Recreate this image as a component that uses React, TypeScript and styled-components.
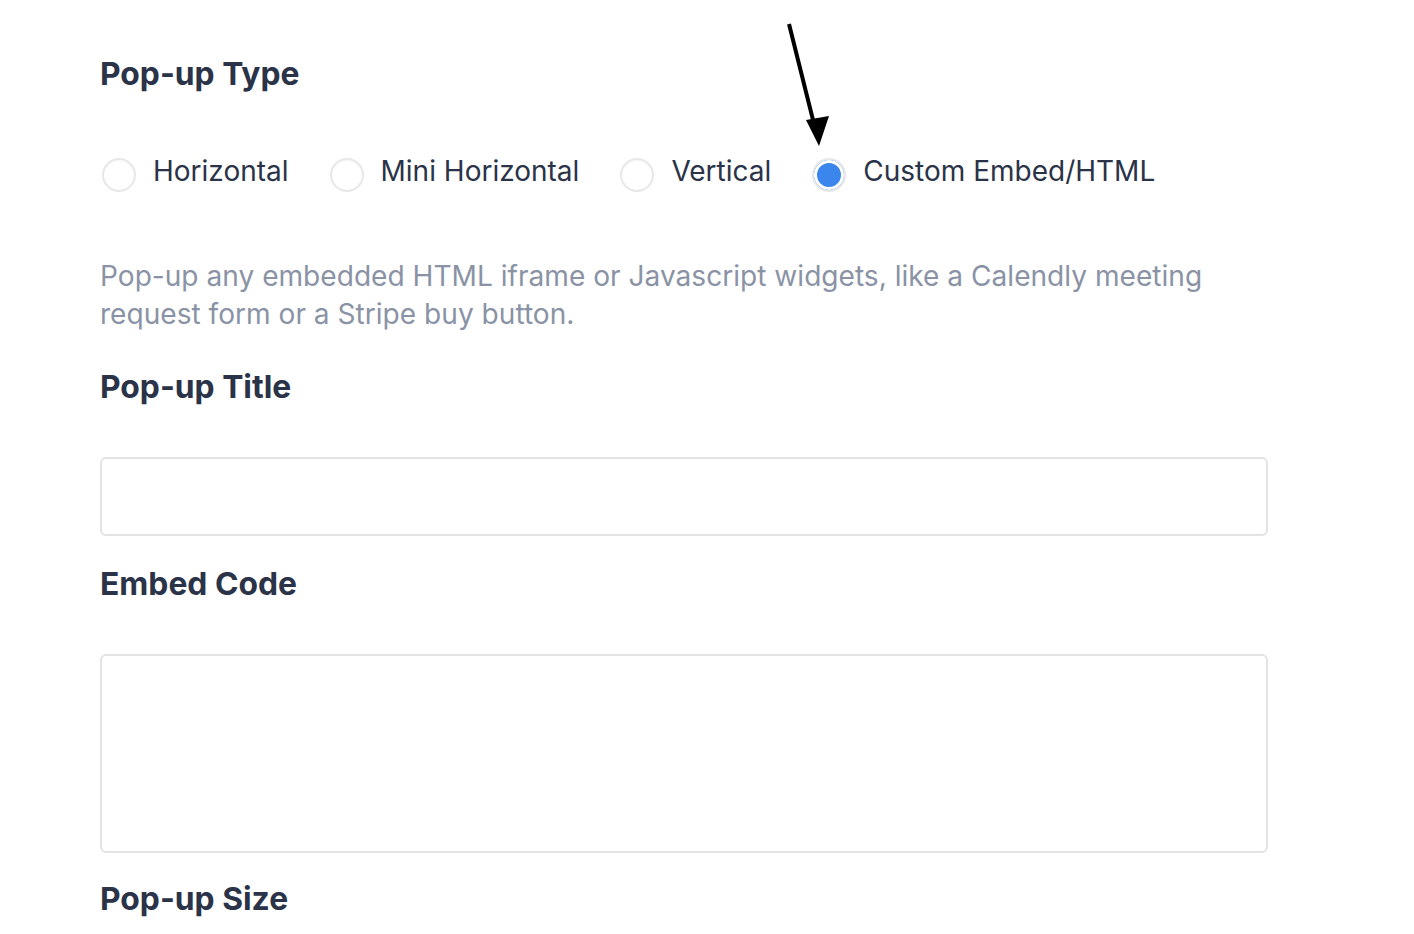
import React, { useState } from "react";
import styled, { createGlobalStyle } from "styled-components";

const GlobalStyle = createGlobalStyle`
  html, body {
    margin: 0;
    padding: 0;
    background: #ffffff;
  }
  body {
    font-family: Inter, "Open Sans", "Liberation Sans", sans-serif;
    color: #2a3347;
  }
`;

const Page = styled.div`
  position: relative;
  width: 1414px;
  min-height: 934px;
  padding: 54px 0 0 100px;
  box-sizing: border-box;
`;

const Form = styled.form`
  display: flex;
  flex-direction: column;
  width: 1168px;
`;

const Heading = styled.h2<{ $gap?: number }>`
  margin: 0 0 ${(p) => p.$gap ?? 40}px;
  font-size: 31.8px;
  line-height: 40px;
  font-weight: 700;
  color: #2a3347;
`;

const RadioRow = styled.div`
  display: flex;
  align-items: center;
  gap: 41px;
  margin-left: 2px;
  margin-bottom: 65px;
`;

const RadioLabel = styled.label`
  display: flex;
  align-items: center;
  gap: 17px;
  font-size: 28px;
  line-height: 40px;
  color: #2a3347;
  cursor: pointer;
`;

const RadioDot = styled.span<{ $checked: boolean }>`
  width: 34px;
  height: 34px;
  box-sizing: border-box;
  border-radius: 50%;
  margin-top: 8px;
  border: 2px solid #e8e8ea;
  background: ${(p) => (p.$checked ? "#3b86ec" : "#ffffff")};
  box-shadow: ${(p) =>
    p.$checked ? "inset 0 0 0 3px #ffffff" : "inset 0 1px 2px rgba(0,0,0,0.04)"};
`;

const Help = styled.p`
  margin: 0 0 34px;
  font-size: 28.1px;
  line-height: 38px;
  color: #8a93a5;
`;

const TextInput = styled.input`
  box-sizing: border-box;
  width: 100%;
  height: 79px;
  margin: 0 0 28px;
  border: 2px solid #e3e3e6;
  border-radius: 6px;
  padding: 0 18px;
  font-size: 26px;
  outline: none;
`;

const CodeArea = styled.textarea`
  box-sizing: border-box;
  width: 100%;
  height: 199px;
  margin: 0 0 26px;
  border: 2px solid #e3e3e6;
  border-radius: 6px;
  padding: 16px 18px;
  font-size: 24px;
  resize: none;
  outline: none;
`;

const Pointer = styled.svg`
  position: absolute;
  left: 780px;
  top: 20px;
`;

const types = ["Horizontal", "Mini Horizontal", "Vertical", "Custom Embed/HTML"];

export default function App() {
  const [type, setType] = useState("Custom Embed/HTML");

  return (
    <Page>
      <GlobalStyle />
      <Form onSubmit={(e) => e.preventDefault()}>
        <Heading $gap={56}>Pop-up Type</Heading>
        <RadioRow>
          {types.map((t) => (
            <RadioLabel key={t} onClick={() => setType(t)}>
              <RadioDot $checked={type === t} />
              {t}
            </RadioLabel>
          ))}
        </RadioRow>
        <Help>
          Pop-up any embedded HTML iframe or Javascript widgets, like a Calendly meeting
          request form or a Stripe buy button.
        </Help>
        <Heading $gap={50}>Pop-up Title</Heading>
        <TextInput type="text" />
        <Heading $gap={50}>Embed Code</Heading>
        <CodeArea />
        <Heading $gap={0}>Pop-up Size</Heading>
      </Form>
      <Pointer width="60" height="130" viewBox="0 0 60 130">
        <line x1="9" y1="4" x2="34" y2="104" stroke="#000" strokeWidth="4" />
        <polygon points="26,100 49,96 39,126" fill="#000" />
      </Pointer>
    </Page>
  );
}
